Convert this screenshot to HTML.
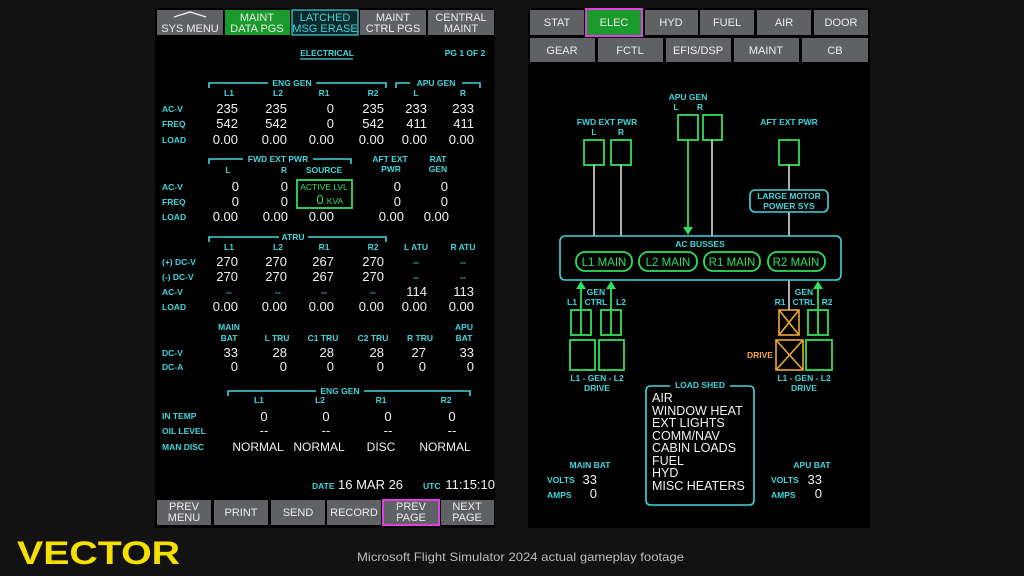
<!DOCTYPE html>
<html><head><meta charset="utf-8"><style>
html,body{margin:0;padding:0;background:#121212;}
svg{display:block}
text{font-family:"Liberation Sans Narrow","Liberation Sans",sans-serif;}
.c{fill:#3fd6dc;font-size:8.5px;font-weight:bold}
.ct{fill:#3fd6dc;font-size:8.5px;font-weight:bold;text-anchor:middle}
.w{fill:#f2f2f2;font-size:13px;text-anchor:end}
.wm{fill:#f2f2f2;font-size:13px;text-anchor:middle}
.b{fill:#ececec;font-size:11px;text-anchor:middle}
.g{fill:#2fe05a;font-size:11.5px;text-anchor:middle}
.gs{fill:#2fe05a;font-size:8.5px;text-anchor:middle}
.br{fill:none;stroke:#3fd6dc;stroke-width:1.6}
.gb{fill:none;stroke:#2fe05a;stroke-width:1.8}
.ob{fill:none;stroke:#f0a830;stroke-width:1.6}
.btn{fill:#5f6165}
</style></head><body>
<svg width="1024" height="576" viewBox="0 0 1024 576">
<rect width="1024" height="576" fill="#121212"/>
<!-- LEFT SCREEN -->
<rect x="155" y="8" width="340" height="520" fill="#000"/>
<rect class="btn" x="157" y="10" width="66" height="25"/>
<polyline points="174,17 190,12 206,17" fill="none" stroke="#eee" stroke-width="1.4"/>
<text class="b" x="190" y="32">SYS MENU</text>
<rect x="225" y="10" width="65" height="25" fill="#1a9a2a"/>
<text class="b" x="257" y="21">MAINT</text><text class="b" x="257" y="32">DATA PGS</text>
<rect x="292" y="10" width="66" height="25" fill="#0c2a2c" stroke="#3fd6dc" stroke-width="1.2"/>
<text class="b" x="325" y="21" style="fill:#3fd6dc">LATCHED</text><text class="b" x="325" y="32" style="fill:#3fd6dc">MSG ERASE</text>
<rect class="btn" x="360" y="10" width="66" height="25"/>
<text class="b" x="393" y="21">MAINT</text><text class="b" x="393" y="32">CTRL PGS</text>
<rect class="btn" x="428" y="10" width="66" height="25"/>
<text class="b" x="461" y="21">CENTRAL</text><text class="b" x="461" y="32">MAINT</text>

<text class="ct" x="327" y="56">ELECTRICAL</text>
<line x1="300" y1="59" x2="353" y2="59" stroke="#3fd6dc" stroke-width="1.2"/>
<text class="ct" x="465" y="56">PG 1 OF 2</text>

<path class="br" d="M209,88 V83 H268 M316,83 H386 V88"/>
<text class="ct" x="292" y="86">ENG GEN</text>
<path class="br" d="M396,88 V83 H410 M462,83 H480 V88"/>
<text class="ct" x="436" y="86">APU GEN</text>
<text class="ct" x="229" y="96">L1</text><text class="ct" x="278" y="96">L2</text><text class="ct" x="324" y="96">R1</text><text class="ct" x="373" y="96">R2</text><text class="ct" x="416" y="96">L</text><text class="ct" x="463" y="96">R</text>
<text class="c" x="162" y="112">AC-V</text><text class="c" x="162" y="127">FREQ</text><text class="c" x="162" y="143">LOAD</text>
<g>
<text class="w" x="238" y="113">235</text><text class="w" x="287" y="113">235</text><text class="w" x="334" y="113">0</text><text class="w" x="384" y="113">235</text><text class="w" x="427" y="113">233</text><text class="w" x="474" y="113">233</text>
<text class="w" x="238" y="128">542</text><text class="w" x="287" y="128">542</text><text class="w" x="334" y="128">0</text><text class="w" x="384" y="128">542</text><text class="w" x="427" y="128">411</text><text class="w" x="474" y="128">411</text>
<text class="w" x="238" y="144">0.00</text><text class="w" x="287" y="144">0.00</text><text class="w" x="334" y="144">0.00</text><text class="w" x="384" y="144">0.00</text><text class="w" x="427" y="144">0.00</text><text class="w" x="474" y="144">0.00</text>
</g>
<path class="br" d="M209,164 V159 H243 M313,159 H351 V164"/>
<text class="ct" x="278" y="162">FWD EXT PWR</text>
<text class="ct" x="390" y="162">AFT EXT</text><text class="ct" x="391" y="172">PWR</text>
<text class="ct" x="438" y="162">RAT</text><text class="ct" x="438" y="172">GEN</text>
<text class="ct" x="228" y="173">L</text><text class="ct" x="284" y="173">R</text><text class="ct" x="324" y="173">SOURCE</text>
<text class="c" x="162" y="190">AC-V</text><text class="c" x="162" y="205">FREQ</text><text class="c" x="162" y="220">LOAD</text>
<text class="w" x="239" y="191">0</text><text class="w" x="288" y="191">0</text><text class="w" x="401" y="191">0</text><text class="w" x="448" y="191">0</text>
<text class="w" x="239" y="206">0</text><text class="w" x="288" y="206">0</text><text class="w" x="401" y="206">0</text><text class="w" x="448" y="206">0</text>
<text class="w" x="238" y="221">0.00</text><text class="w" x="288" y="221">0.00</text><text class="w" x="334" y="221">0.00</text><text class="w" x="404" y="221">0.00</text><text class="w" x="449" y="221">0.00</text>
<rect x="297" y="180" width="55" height="28" class="gb"/>
<text class="gs" x="324" y="190">ACTIVE LVL</text>
<text class="g" x="320" y="204" style="font-size:13px">0</text><text class="gs" x="335" y="204">KVA</text>
<path class="br" d="M209,242 V237 H279 M308,237 H386 V242"/>
<text class="ct" x="293" y="240">ATRU</text>
<text class="ct" x="229" y="250">L1</text><text class="ct" x="278" y="250">L2</text><text class="ct" x="324" y="250">R1</text><text class="ct" x="373" y="250">R2</text><text class="ct" x="416" y="250">L ATU</text><text class="ct" x="463" y="250">R ATU</text>
<text class="c" x="162" y="265">(+) DC-V</text><text class="c" x="162" y="280">(-) DC-V</text><text class="c" x="162" y="295">AC-V</text><text class="c" x="162" y="310">LOAD</text>
<text class="w" x="238" y="266">270</text><text class="w" x="287" y="266">270</text><text class="w" x="334" y="266">267</text><text class="w" x="384" y="266">270</text><text class="ct" x="416" y="265">--</text><text class="ct" x="463" y="265">--</text>
<text class="w" x="238" y="281">270</text><text class="w" x="287" y="281">270</text><text class="w" x="334" y="281">267</text><text class="w" x="384" y="281">270</text><text class="ct" x="416" y="280">--</text><text class="ct" x="463" y="280">--</text>
<text class="ct" x="229" y="295">--</text><text class="ct" x="278" y="295">--</text><text class="ct" x="324" y="295">--</text><text class="ct" x="373" y="295">--</text><text class="w" x="427" y="296">114</text><text class="w" x="474" y="296">113</text>
<text class="w" x="238" y="311">0.00</text><text class="w" x="287" y="311">0.00</text><text class="w" x="334" y="311">0.00</text><text class="w" x="384" y="311">0.00</text><text class="w" x="427" y="311">0.00</text><text class="w" x="474" y="311">0.00</text>
<text class="ct" x="229" y="330">MAIN</text><text class="ct" x="229" y="341">BAT</text>
<text class="ct" x="277" y="341">L TRU</text><text class="ct" x="323" y="341">C1 TRU</text><text class="ct" x="373" y="341">C2 TRU</text><text class="ct" x="420" y="341">R TRU</text>
<text class="ct" x="464" y="330">APU</text><text class="ct" x="464" y="341">BAT</text>
<text class="c" x="162" y="356">DC-V</text><text class="c" x="162" y="370">DC-A</text>
<text class="w" x="238" y="357">33</text><text class="w" x="287" y="357">28</text><text class="w" x="334" y="357">28</text><text class="w" x="384" y="357">28</text><text class="w" x="426" y="357">27</text><text class="w" x="474" y="357">33</text>
<text class="w" x="238" y="371">0</text><text class="w" x="287" y="371">0</text><text class="w" x="334" y="371">0</text><text class="w" x="384" y="371">0</text><text class="w" x="426" y="371">0</text><text class="w" x="474" y="371">0</text>
<path class="br" d="M228,396 V391 H316 M364,391 H470 V396"/>
<text class="ct" x="340" y="394">ENG GEN</text>
<text class="ct" x="259" y="403">L1</text><text class="ct" x="320" y="403">L2</text><text class="ct" x="381" y="403">R1</text><text class="ct" x="446" y="403">R2</text>
<text class="c" x="162" y="419">IN TEMP</text><text class="c" x="162" y="434">OIL LEVEL</text><text class="c" x="162" y="450">MAN DISC</text>
<text class="wm" x="264" y="421">0</text><text class="wm" x="326" y="421">0</text><text class="wm" x="388" y="421">0</text><text class="wm" x="452" y="421">0</text>
<text class="wm" x="264" y="435">--</text><text class="wm" x="326" y="435">--</text><text class="wm" x="388" y="435">--</text><text class="wm" x="452" y="435">--</text>
<text class="wm" x="258" y="451" style="font-size:12px">NORMAL</text><text class="wm" x="319" y="451" style="font-size:12px">NORMAL</text><text class="wm" x="381" y="451" style="font-size:12px">DISC</text><text class="wm" x="445" y="451" style="font-size:12px">NORMAL</text>
<text class="c" x="312" y="489">DATE</text><text class="w" x="338" y="489" style="text-anchor:start">16 MAR 26</text>
<text class="c" x="423" y="489">UTC</text><text class="w" x="495" y="489">11:15:10</text>
<rect class="btn" x="157" y="500" width="54" height="25"/><text class="b" x="184" y="510">PREV</text><text class="b" x="184" y="521">MENU</text>
<rect class="btn" x="214" y="500" width="54" height="25"/><text class="b" x="241" y="516">PRINT</text>
<rect class="btn" x="271" y="500" width="54" height="25"/><text class="b" x="298" y="516">SEND</text>
<rect class="btn" x="327" y="500" width="54" height="25"/><text class="b" x="354" y="516">RECORD</text>
<rect class="btn" x="383" y="500" width="56" height="25" stroke="#e040e0" stroke-width="2"/><text class="b" x="411" y="510">PREV</text><text class="b" x="411" y="521">PAGE</text>
<rect class="btn" x="441" y="500" width="53" height="25"/><text class="b" x="467" y="510">NEXT</text><text class="b" x="467" y="521">PAGE</text>

<!-- RIGHT SCREEN -->
<rect x="528" y="8" width="342" height="520" fill="#000"/>
<rect class="btn" x="530" y="10" width="54" height="25"/><text class="b" x="557" y="26">STAT</text>
<rect x="586" y="9" width="56" height="27" fill="#1a9a2a" stroke="#e040e0" stroke-width="2"/><text class="b" x="614" y="26">ELEC</text>
<rect class="btn" x="645" y="10" width="53" height="25"/><text class="b" x="671" y="26">HYD</text>
<rect class="btn" x="700" y="10" width="54" height="25"/><text class="b" x="727" y="26">FUEL</text>
<rect class="btn" x="757" y="10" width="54" height="25"/><text class="b" x="784" y="26">AIR</text>
<rect class="btn" x="814" y="10" width="54" height="25"/><text class="b" x="841" y="26">DOOR</text>
<rect class="btn" x="530" y="38" width="65" height="24"/><text class="b" x="562" y="54">GEAR</text>
<rect class="btn" x="598" y="38" width="65" height="24"/><text class="b" x="630" y="54">FCTL</text>
<rect class="btn" x="666" y="38" width="65" height="24"/><text class="b" x="698" y="54">EFIS/DSP</text>
<rect class="btn" x="734" y="38" width="65" height="24"/><text class="b" x="766" y="54">MAINT</text>
<rect class="btn" x="802" y="38" width="66" height="24"/><text class="b" x="835" y="54">CB</text>

<text class="ct" x="688" y="100">APU GEN</text><text class="ct" x="676" y="110">L</text><text class="ct" x="700" y="110">R</text>
<rect class="gb" x="678" y="115" width="20" height="25"/><rect class="gb" x="703" y="115" width="19" height="25"/>
<text class="ct" x="607" y="125">FWD EXT PWR</text><text class="ct" x="594" y="135">L</text><text class="ct" x="621" y="135">R</text>
<rect class="gb" x="584" y="140" width="20" height="25"/><rect class="gb" x="611" y="140" width="20" height="25"/>
<text class="ct" x="789" y="125">AFT EXT PWR</text>
<rect class="gb" x="779" y="140" width="20" height="25"/>
<g stroke="#e8e8e8" stroke-width="1.5">
<line x1="594" y1="165" x2="594" y2="236"/><line x1="621" y1="165" x2="621" y2="236"/>
<line x1="712" y1="140" x2="712" y2="236"/><line x1="789" y1="165" x2="789" y2="190"/><line x1="789" y1="212" x2="789" y2="236"/>
<line x1="789" y1="280" x2="789" y2="310"/>
</g>
<line x1="688" y1="140" x2="688" y2="228" stroke="#2fe05a" stroke-width="1.8"/>
<polygon points="683,227 693,227 688,235" fill="#2fe05a"/>
<rect x="750" y="190" width="78" height="22" rx="5" class="br" stroke-width="1.3"/>
<text class="ct" x="789" y="199">LARGE MOTOR</text><text class="ct" x="789" y="209">POWER SYS</text>
<rect x="560" y="236" width="281" height="44" rx="5" class="br" stroke-width="1.3"/>
<text class="ct" x="700" y="247">AC BUSSES</text>
<g class="gb"><rect x="576" y="252" width="56" height="19" rx="9"/><rect x="639" y="252" width="58" height="19" rx="9"/><rect x="704" y="252" width="56" height="19" rx="9"/><rect x="768" y="252" width="57" height="19" rx="9"/></g>
<text class="g" x="604" y="266">L1 MAIN</text><text class="g" x="668" y="266">L2 MAIN</text><text class="g" x="732" y="266">R1 MAIN</text><text class="g" x="796" y="266">R2 MAIN</text>
<g stroke="#2fe05a" stroke-width="1.8"><line x1="581" y1="287" x2="581" y2="335"/><line x1="611" y1="287" x2="611" y2="335"/><line x1="818" y1="287" x2="818" y2="335"/></g>
<g fill="#2fe05a"><polygon points="576,289 586,289 581,281"/><polygon points="606,289 616,289 611,281"/><polygon points="813,289 823,289 818,281"/></g>
<text class="ct" x="596" y="295">GEN</text><text class="ct" x="596" y="305">CTRL</text><text class="ct" x="572" y="305">L1</text><text class="ct" x="621" y="305">L2</text>
<rect class="gb" x="571" y="310" width="20" height="25"/><rect class="gb" x="601" y="310" width="20" height="25"/>
<rect class="gb" x="570" y="340" width="25" height="30"/><rect class="gb" x="599" y="340" width="25" height="30"/>
<text class="ct" x="597" y="381">L1 - GEN - L2</text><text class="ct" x="597" y="391">DRIVE</text>
<text class="ct" x="804" y="295">GEN</text><text class="ct" x="804" y="305">CTRL</text><text class="ct" x="780" y="305">R1</text><text class="ct" x="827" y="305">R2</text>
<rect class="ob" x="779" y="310" width="20" height="25"/><path class="ob" d="M779,310 L799,335 M799,310 L779,335"/>
<rect class="ob" x="776" y="340" width="27" height="30"/><path class="ob" d="M776,340 L803,370 M803,340 L776,370"/>
<text class="ct" x="760" y="358" style="fill:#f0a830">DRIVE</text>
<rect class="gb" x="808" y="310" width="20" height="25"/><rect class="gb" x="806" y="340" width="26" height="30"/>
<text class="ct" x="804" y="381">L1 - GEN - L2</text><text class="ct" x="804" y="391">DRIVE</text>
<path class="br" d="M670,386 H651 Q646,386 646,391 V500 Q646,505 651,505 H749 Q754,505 754,500 V391 Q754,386 749,386 H730" stroke-width="1.3"/>
<text class="ct" x="700" y="388">LOAD SHED</text>
<g fill="#f2f2f2" style="font-size:12.5px">
<text x="652" y="402">AIR</text><text x="652" y="415">WINDOW HEAT</text><text x="652" y="427">EXT LIGHTS</text><text x="652" y="440">COMM/NAV</text><text x="652" y="452">CABIN LOADS</text><text x="652" y="465">FUEL</text><text x="652" y="477">HYD</text><text x="652" y="490">MISC HEATERS</text>
</g>
<text class="ct" x="590" y="468">MAIN BAT</text><text class="c" x="547" y="483">VOLTS</text><text class="c" x="547" y="498">AMPS</text>
<text class="w" x="597" y="484">33</text><text class="w" x="597" y="498">0</text>
<text class="ct" x="812" y="468">APU BAT</text><text class="c" x="771" y="483">VOLTS</text><text class="c" x="771" y="498">AMPS</text>
<text class="w" x="822" y="484">33</text><text class="w" x="822" y="498">0</text>

<text x="17" y="564" style="font-family:'Liberation Sans',sans-serif;font-weight:bold;font-size:32px;fill:#f5e000" textLength="163" lengthAdjust="spacingAndGlyphs">VECTOR</text>
<text x="357" y="561" style="font-family:'Liberation Sans',sans-serif;font-size:12px;fill:#bbb" textLength="327" lengthAdjust="spacingAndGlyphs">Microsoft Flight Simulator 2024 actual gameplay footage</text>
</svg>
</body></html>
